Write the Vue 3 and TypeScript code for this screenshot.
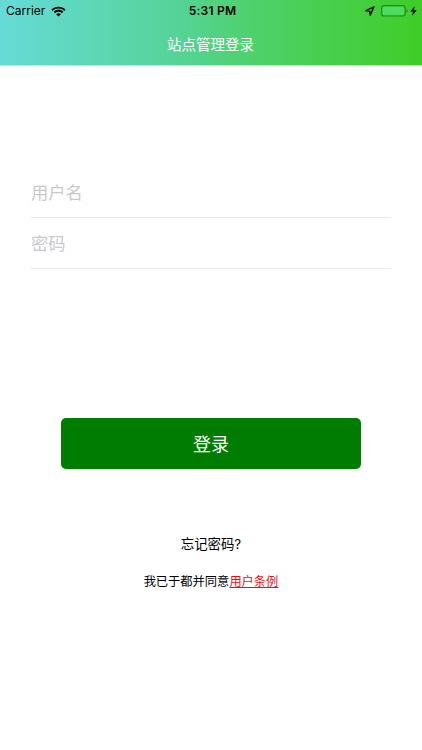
<script setup lang="ts">
import { ref } from 'vue'

const username = ref('')
const password = ref('')
</script>

<template>
  <div class="screen">
    <header class="header">
      <div class="status">
        <div class="carrier">
          <span>Carrier</span>
          <svg class="wifi" width="15" height="11" viewBox="0 0 15 11">
            <path d="M.4 3.5C4.4-.3 10.6-.3 14.6 3.5L13.3 4.9C10 1.8 5 1.8 1.7 4.9Z" />
            <path d="M2.7 5.8C5.4 3.2 9.6 3.2 12.3 5.8L10.9 7.2C8.9 5.4 6.1 5.4 4.1 7.2Z" />
            <path d="M5.1 8.2C6.5 6.9 8.5 6.9 9.9 8.2L7.5 10.6Z" />
          </svg>
        </div>
        <span class="time">5:31 PM</span>
        <div class="indicators">
          <svg width="10" height="10" viewBox="0 0 10 10">
            <path class="arrow" d="M9 .9 .8 4.7 4.7 5.1 5.2 9.1Z" />
          </svg>
          <svg class="battery" width="28" height="12" viewBox="0 0 28 12">
            <rect class="shell" x=".6" y=".6" width="23.6" height="10.4" rx="2.6" />
            <rect class="charge" x="1.8" y="1.8" width="21.2" height="8" rx="1.4" />
            <path class="tip" d="M25.4 4v4q1.3-.6 1.3-2t-1.3-2Z" />
          </svg>
          <svg class="bolt" width="7" height="10" viewBox="0 0 7 10">
            <path d="M4.7.2.3 5.6H3L2.1 9.8 6.7 4.2H3.9Z" />
          </svg>
        </div>
      </div>
      <h1 class="title">站点管理登录</h1>
    </header>

    <form class="form" @submit.prevent>
      <input v-model="username" class="field" type="text" placeholder="用户名" />
      <input v-model="password" class="field" type="password" placeholder="密码" />
      <button class="submit" type="submit">登录</button>
    </form>

    <footer class="footer">
      <div class="forgot">忘记密码?</div>
      <div class="terms">我已于都并同意<a class="link">用户条例</a></div>
    </footer>
  </div>
</template>

<style>
body {
  margin: 0;
  background: #fff;
}
</style>

<style scoped>
.screen {
  height: 750px;
  overflow: hidden;
  background: #fff;
  color: #000;
  font-family: Inter, "Noto Sans CJK SC", sans-serif;
}

.header {
  height: 65px;
  border-bottom: 1px solid #b9edc4;
  background: linear-gradient(90deg, #65dbd8 0%, #55d49b 40%, #4ed16c 60%, #3fcd28 100%);
}

.status {
  display: grid;
  grid-template-columns: 1fr auto 1fr;
  align-items: center;
  height: 22px;
  padding: 0 5px 0 6px;
  font-size: 12px;
  line-height: 22px;
}

.carrier {
  display: flex;
  align-items: center;
  gap: 6px;
}

.time {
  padding-left: 2px;
  font-weight: 600;
  letter-spacing: 0.25px;
}

.indicators {
  display: flex;
  align-items: center;
  justify-content: flex-end;
}

.arrow {
  fill: none;
  stroke: #061c05;
  stroke-width: 1.4;
  stroke-linejoin: round;
}

.battery {
  margin-left: 6px;
}

.shell {
  fill: none;
  stroke: #258a1e;
  stroke-width: 1.1;
}

.charge {
  fill: #4fdb62;
}

.tip {
  fill: #258a1e;
}

.bolt {
  margin-left: 1px;
}

.title {
  margin: 0;
  padding-right: 1px;
  color: #fff;
  font-size: 14.5px;
  font-weight: 400;
  line-height: 46px;
  text-align: center;
}

.form {
  display: flex;
  flex-direction: column;
  padding: 101px 31px 0;
}

.field {
  box-sizing: border-box;
  width: 100%;
  height: 51px;
  padding: 0;
  border: 0;
  border-bottom: 1px solid #e9e9e9;
  border-radius: 0;
  outline: none;
  background: transparent;
  font: 400 17.3px Inter, "Noto Sans CJK SC", sans-serif;
}

.field::placeholder {
  color: #c9c9ce;
  opacity: 1;
}

.submit {
  height: 51px;
  margin: 149px 30px 0;
  padding: 0 0 2px;
  border: 0;
  border-radius: 5px;
  background: #007d00;
  color: #fff;
  font: 400 18px Inter, "Noto Sans CJK SC", sans-serif;
}

.footer {
  padding-top: 64px;
  text-align: center;
}

.forgot {
  font-size: 13.4px;
  line-height: 22px;
}

.terms {
  margin-top: 16px;
  font-size: 12.25px;
  line-height: 22px;
}

.link {
  color: #e0131b;
  text-decoration: underline;
  text-decoration-thickness: 1px;
  text-underline-offset: 1px;
}
</style>
